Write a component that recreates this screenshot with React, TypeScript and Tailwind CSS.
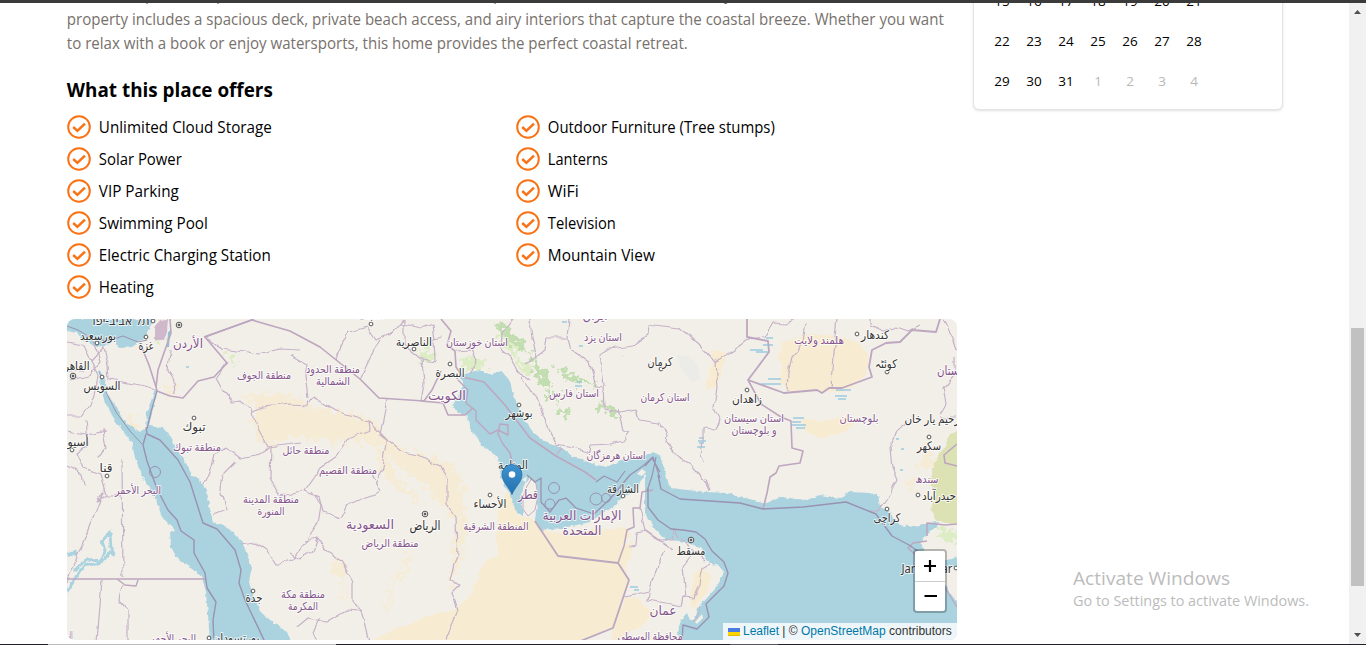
import React from "react";

type Line = { d: string; w?: number; c?: string };
type Label = { x: number; y: number; t: string; w: number; s?: number; k?: "city" | "area" };

const offersLeft = ["Unlimited Cloud Storage", "Solar Power", "VIP Parking", "Swimming Pool", "Electric Charging Station", "Heating"];
const offersRight = ["Outdoor Furniture (Tree stumps)", "Lanterns", "WiFi", "Television", "Mountain View"];

const weeks = [
  ["15", "16", "17", "18", "19", "20", "21"],
  ["22", "23", "24", "25", "26", "27", "28"],
  ["29", "30", "31", "1", "2", "3", "4"],
];

const water = [
  "M67 319H155L152 325 145 338 132 347 119 348 115 339 110 344 97 347 82 340 77 332 67 330Z",
  "M101 378L104 376 106 386 108 395 115 405 125 422 135 429 140 433 146 428 147 412 155 390 158 390 153 408 149 426 163 428 171 437 177 450 185 461 192 475 200 480 207 490 209 505 213 522 227 527 242 542 248 557 252 568 249 582 253 595 260 611 267 618 287 632 291 642H210L208 615 206 592 202 577 187 565 177 558 171 547 170 532 175 530 163 518 155 498 143 477 135 458 132 443 125 434 113 417 104 400 100 384Z",
  "M460 376L468 373 480 370 490 374 502 371 512 385 514 397 523 418 533 432 547 443 562 448 573 456 593 464 607 467 623 459 643 457 653 452 661 456 666 475 670 488 687 490 707 492 727 493 740 497 767 503 780 497 807 500 820 495 840 498 850 492 870 493 878 495 880 507 890 512 900 525 913 527 927 523 940 522 927 535 920 542 925 552 942 561 960 557V566L940 569 939 577 960 607V642H680L678 632 681 619 687 613 690 620 695 619 698 608 707 598 717 587 723 572 720 567 708 562 700 547 680 541 665 540 653 527 645 512 645 475 640 482 635 492 623 497 613 507 600 515 590 522 563 528 540 530 535 520 537 505 537 488 530 477 525 483 521 495 523 515 516 513 511 495 503 485 499 467 498 457 483 447 477 437 472 432 467 415 457 412 453 405 463 387Z",
];

const dunes = [
  "M510 482L504 500 498 508 497 540 498 555 482 563 478 582 469 595 456 609 423 618 400 627 390 632 370 642H576L613 628 629 580 618 563 622 545 631 534 625 528 590 530 567 533 540 530 535 518 518 515Z",
  "M618 570L621 548 634 541 628 565 626 574Z",
  "M613 628L625 598 640 599 653 614 639 628 624 634 619 642H614Z",
  "M783 343L805 334 833 335 860 343 869 355 866 376 850 388 840 391 817 392 787 391 780 383 783 366 777 358Z",
  "M804 417L820 422 848 416 853 425 842 433 820 438 804 430Z",
  "M711 352L719 351 726 353 717 387 707 389 708 372 713 362Z",
  "M694 574L703 566 711 578 707 592 692 610 691 595Z",
];

const sandStreaks = [
  "M238 388L247 394 257 396 270 393 301 396 301 404 320 408 350 413 373 421 383 436 404 449 435 458 453 465 463 482 465 540 456 576 447 592 452 560 455 525 445 508 430 492 412 477 392 459 374 445 344 440 334 444 318 439 290 437 271 445 260 440 250 418 259 412Z",
  "M382 449L390 465 409 489 428 507 412 499 398 487 382 472 377 464Z",
  "M123 412L130 414 143 430 139 434 127 424Z",
  "M165 386L174 383 175 395 164 395Z",
  "M922 455L930 449 934 462 925 474 918 468Z",
  "M908 475L914 476 916 494 910 488Z",
  "M337 562L345 564 347 595 352 606 345 598 340 580 332 569Z",
  "M410 550L413 551 396 586 388 614 385 613 393 582Z",
];

const green = [
  "M463 365L468 355 478 357 487 366 483 371 472 373 463 376Z",
  "M418 352L431 350 437 362 422 360Z",
  "M500 334L511 337 523 349 514 355 503 346Z",
  "M513 355L525 363 533 366 530 374 518 368Z",
  "M226 352L236 359 235 363 227 358Z",
  "M155 331L164 324 166 337 157 342Z",
  "M936 535L946 528 957 532V545L946 538Z",
];

const forest = [
  "M497 320L503 322 511 334 524 343 530 354 522 352 509 340 500 333Z",
  "M530 353L541 366 550 385 543 388 532 368Z",
  "M554 364L573 374 583 383 576 383 560 374Z",
  "M593 405L607 404 618 413 618 417 604 413Z",
  "M549 389L561 398 559 403 547 395Z",
  "M557 405L573 413 568 416 555 410Z",
  "M577 377L592 382 595 386 581 384Z",
  "M620 353L625 358 621 356Z",
];

const farm = ["M950 433L960 430V525L938 522 930 510 936 493 930 480 934 462 943 448Z"];

const frontiers: Line[] = [
  { d: "M142 348L149 365 156 387 157 391 170 396 183 398 198 381 214 377 227 363 205 337 254 319", w: 1.6 },
  { d: "M156 387L158 370 165 350 171 333 170 319", w: 1.6 },
  { d: "M204 337L252 320 262 323 290 331 320 347 335 359 360 379 379 398 424 401 432 390 441 371", w: 1.6 },
  { d: "M421 401L443 403 448 415 465 415 473 408", w: 1.6 },
  { d: "M441 319L451 331 447 345 455 351 456 367 463 377 484 382 505 405 530 438 556 456 585 472 596 480", w: 1.6 },
  { d: "M457 379L468 390 466 403 476 411 476 420 490 434 498 430 508 435 508 425 500 424 498 434 503 444 510 453 514 470", w: 1.4 },
  { d: "M67 579H206", w: 1.6 },
  { d: "M117 579L125 585 136 586 138 580", w: 1.4 },
  { d: "M535 521L558 556 618 563 629 580 613 628 578 642", w: 1.8 },
  { d: "M618 563L624 546 627 530 634 527 633 508 640 508 642 492 653 490", w: 1.5 },
  { d: "M747 319V337L768 341 769 352 748 380 784 393 817 390 822 393 829 388 842 388 872 377 869 367 872 350 886 343 900 342 912 330 936 332 940 319", w: 1.8 },
  { d: "M748 380L761 404 781 417 791 421 792 448 803 451 800 463 779 466 776 473 770 477 767 493 763 509", w: 1.6 },
  { d: "M927 541L913 543 908 548 937 575 957 607", w: 1.3 },
  { d: "M927 536V523L945 525 957 524", w: 1.5 },
  { d: "M957 444L944 455 945 463 957 466", w: 1.6 },
  // maritime limits
  { d: "M146 434L143 445 147 461 157 489 168 510 177 520 181 531 194 540V553L205 573 207 588 216 602 213 620 214 642", w: 1.4, c: "#9992b0" },
  { d: "M146 427L147 434 160 440 178 460 190 482 203 523 217 529 235 550 241 570 239 583 245 600 265 642", w: 1.4, c: "#9992b0" },
  { d: "M157 391L151 412 147 429", w: 1.2, c: "#9992b0" },
  { d: "M106 392L116 412 130 431 142 444", w: 1, c: "#9992b0" },
  { d: "M67 326L78 330 91 338 107 341 123 336 138 342 147 340", w: 1, c: "#9992b0" },
  { d: "M658 475L661 489 680 499 740 503 763 509 803 507 846 502 876 514 892 536 909 545 919 552", w: 1.4, c: "#9992b0" },
  { d: "M648 488V507L658 520 671 529 683 530 696 532 705 539 712 551 724 562 728 573 724 586 706 604 709 617 697 629 683 625 682 642", w: 1.4, c: "#9992b0" },
  { d: "M527 475L535 482 541 478 541 502 550 512 559 500 566 498 576 508 594 514 610 499 630 475 643 466 652 458 660 472", w: 1.3, c: "#9992b0" },
  { d: "M656 457L652 476 647 491M596 482L604 476 617 482 625 471M645 466L653 457 660 478", w: 1.2, c: "#9992b0" },
];

const provinces = [
  "M67 342L83 345 91 361 104 347 108 365 109 379 145 386 157 389",
  "M90 335L97 351 100 362 88 376 70 380M67 371L84 371M91 361L98 375 95 397 82 416 67 416",
  "M67 431L87 434 106 430M86 420L88 445 77 453 84 468 101 474 107 495 97 501 104 490 67 582",
  "M122 460L123 578M107 496H123M67 465L81 473 83 486M103 428L106 449 96 458",
  "M102 580L97 642M122 585L119 600 128 610 128 642",
  "M205 337L222 349 244 352 258 355 280 349 300 350",
  "M170 350L168 371 174 380 175 395M227 363L216 378 223 391 233 402 240 401 252 408 255 423 268 447 301 443",
  "M226 448L214 454 211 467 204 483M226 448L240 459 256 456 271 447 270 478 280 495 302 491",
  "M213 515L226 510 220 490 222 475 235 462",
  "M242 545L256 543 267 550 277 566 293 559 307 540 318 524 321 505 312 491",
  "M253 413L263 407 290 404 307 405",
  "M335 359L349 332 367 327",
  "M387 399L380 435 388 441M307 405L312 397 336 411 350 415 369 421 388 441 402 452 419 455 440 466 447 480",
  "M290 356L307 365 305 375 308 398M369 421L370 430 350 437 337 456 320 468 304 491 319 497 323 512 340 518 346 506 380 491 369 469",
  "M388 441L385 452 383 468 375 483M367 327L376 340 391 333 403 319M360 379L374 350 380 340M404 319V345L422 360 435 362 434 339 443 337M422 360L424 384 421 401",
  "M435 339L433 324 421 328 400 323M456 351L471 350 476 360 470 373",
  "M447 480L447 505 456 517 457 555 450 580 460 584 452 592 458 611 445 642",
  "M304 541L318 538 325 549 341 561 353 581 353 602 362 611 370 642M361 611L346 610 326 622 308 618 297 627",
  "M318 538L312 552 300 559 290 553M320 617L313 632 317 642",
  "M530 319L532 338 537 357 545 351 547 338 567 338 569 347 589 362 596 386 603 387 604 409 620 412 636 409 639 420 660 423 667 433 666 443 677 456 692 465 706 482 709 491",
  "M567 338L569 319M604 387L602 368 600 355 609 349 632 346 648 335 649 324 678 328 697 343 715 362 735 349 750 338 763 336",
  "M715 362L717 387 714 409 720 419 716 429 703 428 703 440 701 455 704 463",
  "M618 409L623 430 630 432 623 441 610 444 591 445 590 452 573 447 556 444 546 423 538 400 527 386 520 376",
  "M512 320L502 333 501 348 512 357 518 372 530 380M538 357L525 364M562 448L557 454",
  "M763 339L773 322 786 323 797 319M837 319L833 352 831 389M805 324L801 347 792 357 788 373 787 391",
  "M870 319V325L884 331 897 327 908 331 920 325M943 319L953 338 957 350M954 358L954 376 943 389 946 404 940 414",
  "M940 417H957M907 424L896 431 890 448 892 468 897 480 889 496 878 511 870 511",
  "M640 508L645 530 660 541 673 550M664 550L652 580 648 600 681 606 683 597 695 598 700 583 703 567 710 563M649 592L625 597",
  "M629 547L636 545 637 532 646 530 660 540 673 539 674 530 682 540 705 560M690 557L682 567 685 598M706 478L710 490M701 607L693 622",
];

const lakes = "M756 352h12M750 350h13M763 345h10M766 338h7M836 390h15M835 396h12M838 399h8M793 418h11M792 425h14M792 422h9M796 428h9M761 384h20M768 379h13M698 441h8M697 447h8M699 438h5M699 443h5M562 322h5M579 346h4M630 587h8M634 590h5M896 439h3M901 449h3M900 470h3M575 386h7M577 382h5M186 367h3";

const dots: [number, number, boolean?][] = [
  [179, 325, true], [153, 321], [146, 337], [97, 343], [73, 376, true], [102, 377], [72, 450], [107, 476], [194, 418], [371, 324], [414, 349], [450, 364],
  [519, 405], [490, 495], [425, 514, true], [253, 591], [209, 638], [661, 369], [857, 334], [887, 372], [747, 390], [929, 437], [918, 495], [887, 509], [623, 496], [691, 540, true], [956, 568],
];

const labels: Label[] = [
  { x: 121, y: 325, t: "תל אביב-יפו", w: 57, s: 12, k: "city" },
  { x: 98, y: 340, t: "بورسعيد", w: 36, k: "city" },
  { x: 146, y: 350, t: "غزة", w: 15, k: "city" },
  { x: 188, y: 348, t: "الأردن", w: 30, s: 12 },
  { x: 74, y: 370, t: "القاهرة", w: 31, k: "city" },
  { x: 102, y: 390, t: "السويس", w: 37, k: "city" },
  { x: 264, y: 379, t: "منطقة الجوف", w: 54 },
  { x: 194, y: 431, t: "تبوك", w: 23, k: "city" },
  { x: 197, y: 451, t: "منطقة تبوك", w: 48 },
  { x: 73, y: 446, t: "أسيوط", w: 31, k: "city" },
  { x: 106, y: 472, t: "قنا", w: 13, k: "city" },
  { x: 138, y: 494, t: "البحر الأحمر", w: 46 },
  { x: 271, y: 503, t: "منطقة المدينة", w: 56 },
  { x: 271, y: 515, t: "المنورة", w: 27 },
  { x: 306, y: 454, t: "منطقة حائل", w: 47 },
  { x: 333, y: 373, t: "منطقة الحدود", w: 54 },
  { x: 333, y: 385, t: "الشمالية", w: 34 },
  { x: 371, y: 319, t: "النجف", w: 27, k: "city" },
  { x: 414, y: 346, t: "الناصرية", w: 36, k: "city" },
  { x: 477, y: 346, t: "استان خوزستان", w: 62 },
  { x: 450, y: 377, t: "البصرة", w: 29, k: "city" },
  { x: 447, y: 400, t: "الكويت", w: 38, s: 12 },
  { x: 519, y: 417, t: "بوشهر", w: 27, k: "city" },
  { x: 348, y: 474, t: "منطقة القصيم", w: 58 },
  { x: 370, y: 529, t: "السعودية", w: 48, s: 12 },
  { x: 425, y: 530, t: "الرياض", w: 31, k: "city", s: 12 },
  { x: 390, y: 547, t: "منطقة الرياض", w: 57 },
  { x: 490, y: 508, t: "الأحساء", w: 33, k: "city" },
  { x: 496, y: 530, t: "المنطقة الشرقية", w: 65 },
  { x: 513, y: 469, t: "المنامة", w: 30, k: "city" },
  { x: 528, y: 499, t: "قطر", w: 20, s: 12 },
  { x: 254, y: 602, t: "جدة", w: 17, k: "city" },
  { x: 303, y: 598, t: "منطقة مكة", w: 44 },
  { x: 303, y: 610, t: "المكرمة", w: 30 },
  { x: 173, y: 642, t: "البحر الأحمر", w: 46 },
  { x: 236, y: 642, t: "بورتسودان", w: 47, k: "city" },
  { x: 68, y: 639, t: "النيل", w: 9 },
  { x: 595, y: 320, t: "ایران", w: 25, s: 12 },
  { x: 603, y: 341, t: "استان یزد", w: 38 },
  { x: 574, y: 397, t: "استان فارس", w: 50 },
  { x: 660, y: 366, t: "کرمان", w: 25, k: "city" },
  { x: 665, y: 401, t: "استان کرمان", w: 49 },
  { x: 747, y: 403, t: "زاهدان", w: 30, k: "city" },
  { x: 754, y: 422, t: "استان سیستان", w: 60 },
  { x: 754, y: 434, t: "و بلوچستان", w: 45 },
  { x: 616, y: 459, t: "استان هرمزگان", w: 59 },
  { x: 623, y: 493, t: "الشارقة", w: 32, k: "city" },
  { x: 582, y: 520, t: "الإمارات العربية", w: 79, s: 12 },
  { x: 582, y: 535, t: "المتحدة", w: 39, s: 12 },
  { x: 691, y: 555, t: "مسقط", w: 29, k: "city" },
  { x: 663, y: 615, t: "عمان", w: 27, s: 12 },
  { x: 650, y: 640, t: "محافظة الوسطى", w: 65 },
  { x: 819, y: 344, t: "هلمند ولایت", w: 50 },
  { x: 875, y: 339, t: "کندهار", w: 28, k: "city" },
  { x: 886, y: 368, t: "کوئٹہ", w: 22, k: "city" },
  { x: 954, y: 375, t: "پاکستان", w: 34, s: 12 },
  { x: 859, y: 422, t: "بلوچستان", w: 39 },
  { x: 932, y: 423, t: "رحیم یار خان", w: 55, k: "city" },
  { x: 929, y: 450, t: "سکھر", w: 24, k: "city" },
  { x: 927, y: 483, t: "سندھ", w: 23 },
  { x: 939, y: 500, t: "حیدرآباد", w: 34, k: "city" },
  { x: 887, y: 522, t: "کراچی", w: 27, k: "city" },
  { x: 927, y: 573, t: "Jamnagar", w: 51, k: "city", s: 12 },
];

const offerWidth: Record<string, number> = {
  "Unlimited Cloud Storage": 173,
  "Solar Power": 83,
  "VIP Parking": 80,
  "Swimming Pool": 109,
  "Electric Charging Station": 172,
  Heating: 55,
  "Outdoor Furniture (Tree stumps)": 227,
  Lanterns: 60,
  WiFi: 31,
  Television: 68,
  "Mountain View": 107,
};

function CheckCircle() {
  return (
    <svg width="24" height="24" viewBox="0 0 24 24" fill="none" stroke="#f97316" className="shrink-0">
      <circle cx="12" cy="12" r="10.8" strokeWidth="2" />
      <path d="M6.2 12L10.4 15.9L18 8.6" strokeWidth="2.5" />
    </svg>
  );
}

function Offer({ text }: { text: string }) {
  return (
    <li className="flex h-6 items-center gap-2">
      <CheckCircle />
      <svg className="h-6 grow overflow-visible" aria-label={text}>
        <text x="-0.2" y="18" textLength={offerWidth[text]} lengthAdjust="spacingAndGlyphs" className="fill-black text-[15.5px]">
          {text}
        </text>
      </svg>
    </li>
  );
}

function RegionMap() {
  return (
    <svg width="890" height="321" viewBox="67 319 890 321" className="block">
      <defs>
        <linearGradient id="pin" x1="0" y1="0" x2="0" y2="1">
          <stop offset="0" stopColor="#3f93d0" />
          <stop offset="1" stopColor="#2471ae" />
        </linearGradient>
        <filter id="rough" filterUnits="userSpaceOnUse" x="57" y="309" width="910" height="341">
          <feTurbulence type="fractalNoise" baseFrequency="0.1" numOctaves="1" seed="4" result="n" />
          <feDisplacementMap in="SourceGraphic" in2="n" scale="7" xChannelSelector="R" yChannelSelector="G" />
        </filter>
        <filter id="coast" filterUnits="userSpaceOnUse" x="57" y="309" width="910" height="341">
          <feTurbulence type="fractalNoise" baseFrequency="0.2" numOctaves="2" seed="9" result="n" />
          <feDisplacementMap in="SourceGraphic" in2="n" scale="4" xChannelSelector="R" yChannelSelector="G" />
        </filter>
        <filter id="scatter" filterUnits="userSpaceOnUse" x="57" y="309" width="910" height="341">
          <feTurbulence type="fractalNoise" baseFrequency="0.16" numOctaves="3" seed="2" result="n" />
          <feDisplacementMap in="SourceGraphic" in2="n" scale="22" xChannelSelector="R" yChannelSelector="G" />
        </filter>
      </defs>
      <rect x="67" y="319" width="890" height="321" fill="#f2efe9" />
      <g filter="url(#rough)">
        {dunes.map((d) => <path key={d} d={d} fill="#f7ecd1" />)}
        {farm.map((d) => <path key={d} d={d} fill="#dde2b4" />)}
      </g>
      <g filter="url(#scatter)">
        {sandStreaks.map((d) => <path key={d} d={d} fill="#f6ecd5" />)}
        {green.map((d) => <path key={d} d={d} fill="#dcecc3" />)}
        {forest.map((d) => <path key={d} d={d} fill="#c2ddb0" />)}
      </g>
      <path d="M677 355L689 356 698 366 700 380 692 382 682 370Z" fill="#ebebe7" />
      <path d="M155 328L160 320 168 319 167 332 164 341 155 339Z" fill="#cfb7cc" filter="url(#rough)" />
      <g filter="url(#coast)">
        {water.map((d) => <path key={d} d={d} fill="#aad3df" />)}
        <path d="M74 571L81 564 87 559 100 562 105 551 102 541 110 532 111 548 115 556 110 552 104 560 97 565 86 564 79 572 67 592M67 553l10 1M69 556l7-5" stroke="#aad3df" strokeWidth="2.8" fill="none" />
      </g>
      <path d="M532 478L527 486 523 497 523 509 528 516 535 510 538 496 536 484Z" fill="#f2efe9" stroke="#c3aec6" />
      <path d="M637 474l5-5 4 3-4 4zM522 480l5-4-1 6zM695 622l7-8 1 4-6 6z" fill="#f2efe9" />
      <path d="M169 332L168 347M102 378l-3-7M169 337l1-6" stroke="#8fc3da" strokeWidth="2" fill="none" />
      <path d={lakes} stroke="#9acbe0" strokeWidth="1.3" />
      <g filter="url(#rough)" fill="none" stroke="#c6b2c8" strokeWidth="1.2" strokeLinejoin="round">
        {provinces.map((d) => <path key={d} d={d} />)}
      </g>
      {frontiers.map((b) => (
        <path key={b.d} d={b.d} fill="none" stroke={b.c ?? "#bda6bf"} strokeWidth={b.w ?? 1} strokeLinejoin="round" />
      ))}
      <g fill="none" stroke="#9992b0" strokeWidth="1">
        <circle cx="155" cy="472" r="5.5" />
        <circle cx="554" cy="488" r="5.5" />
        <circle cx="550" cy="504" r="5" />
        <circle cx="596" cy="499" r="6" />
        <circle cx="606" cy="498" r="4.5" />
      </g>
      {dots.map(([x, y, cap]) => (
        <g key={x + "-" + y} fill="#fff" stroke="#555" strokeWidth="1">
          <circle cx={x} cy={y} r={cap ? 2.8 : 1.9} />
          {cap && <circle cx={x} cy={y} r="1" fill="#444" />}
        </g>
      ))}
      {labels.map((l) => (
        <text
          key={l.x + "," + l.y}
          x={l.x}
          y={l.y}
          textAnchor="middle"
          textLength={l.w}
          lengthAdjust="spacingAndGlyphs"
          fontSize={l.s ? l.s + 1 : l.k ? 12 : 11}
          fill={l.k ? "#333" : "#85558c"}
          stroke="#fff"
          strokeOpacity=".75"
          strokeWidth="2"
          strokeLinejoin="round"
          paintOrder="stroke"
          fontFamily="'Noto Sans', 'DejaVu Sans', sans-serif"
        >
          {l.t}
        </text>
      ))}
      <path d="M512 494.500C509 487 502 482 502 474.500A10 10 0 0 1 522 474.500C522 482 515 487 512 494.500Z" fill="url(#pin)" stroke="#2a74ad" strokeWidth=".8" />
      <circle cx="512" cy="474.5" r="3.3" fill="#fff" />
    </svg>
  );
}

export default function App() {
  return (
    <div className="relative flex h-[645px] w-[1366px] flex-col overflow-hidden bg-white font-['Open_Sans','Noto_Sans',sans-serif] text-black">
      <div className="h-[3px] shrink-0 bg-[#3b3b3b]" />
      <div className="flex h-[641px] overflow-hidden">
        <main className="ml-[67px] w-[890px] shrink-0">
          <div className="-mt-5 h-[73px] text-[#78716c]">
            <svg width="890" height="72" className="block overflow-visible text-[15.5px]" fill="currentColor">
              <text x="78" y="17">p</text>
              <text x="149" y="17">p</text>
              <text x="426" y="17">p</text>
              <text x="657" y="17">y</text>
              <text x="-0.2" y="42" textLength="877" lengthAdjust="spacingAndGlyphs">
                property includes a spacious deck, private beach access, and airy interiors that capture the coastal breeze. Whether you want
              </text>
              <text x="-0.2" y="66" textLength="621" lengthAdjust="spacingAndGlyphs">
                to relax with a book or enjoy watersports, this home provides the perfect coastal retreat.
              </text>
            </svg>
          </div>
          <h2 className="mt-5 h-7">
            <svg width="300" height="28" className="block overflow-visible">
              <text x="-0.2" y="21" textLength="206" lengthAdjust="spacingAndGlyphs" className="fill-black text-[19px] font-bold">
                What this place offers
              </text>
            </svg>
          </h2>
          <div className="mt-[11px] grid h-44 grid-cols-[449px_441px]">
            <ul className="flex flex-col gap-2">
              {offersLeft.map((o) => <Offer key={o} text={o} />)}
            </ul>
            <ul className="flex flex-col gap-2">
              {offersRight.map((o) => <Offer key={o} text={o} />)}
            </ul>
          </div>
          <section className="relative mt-7 h-[321px] overflow-hidden rounded-lg">
            <RegionMap />
            <div className="absolute right-[10px] bottom-[27px] flex h-[64px] w-[34px] flex-col overflow-hidden rounded border-2 border-black/25 bg-white bg-clip-padding">
              <button className="flex h-[31px] items-center justify-center border-b border-[#ccc]">
                <svg width="14" height="14" viewBox="0 0 14 14" stroke="#000" strokeWidth="2.2"><path d="M1 7H13M7 1V13" /></svg>
              </button>
              <button className="flex h-[27px] items-center justify-center">
                <svg width="14" height="14" viewBox="0 0 14 14" stroke="#000" strokeWidth="2"><path d="M1.5 7H14" /></svg>
              </button>
            </div>
            <div className="absolute right-0 bottom-0 flex h-[17px] w-[234px] items-center bg-white/80 pb-0.5 pl-[5px] font-['Liberation_Sans',Arial,sans-serif] text-[12px] whitespace-pre text-[#333]">
              <svg width="12" height="8" viewBox="0 0 12 8" className="mt-0.5 mr-[3px]"><path d="M0 0h12v4H0z" fill="#4c7be1" /><path d="M0 4h12v3H0z" fill="#ffd500" /><path d="M0 7h12v1H0z" fill="#e0bc00" /></svg>
              <span className="text-[#0078a8]">Leaflet</span>
              <span> | © </span>
              <span className="text-[#0078a8]">OpenStreetMap</span>
              <span> contributors</span>
            </div>
          </section>
        </main>
        <aside className="ml-4 w-[310px] shrink-0">
          <div className="-mt-[23px] h-[130px] rounded-md border border-[#e5e5e5] bg-white pl-3 text-[13.5px] shadow-sm">
            {weeks.map((week, row) => (
              <div key={row} className="flex h-10 items-center">
                {week.map((day) => (
                  <span key={day} className={row === 2 && day.length === 1 ? "w-8 text-center text-[#b8b8b8]" : "w-8 text-center"}>{day}</span>
                ))}
              </div>
            ))}
          </div>
          <div className="mt-[456px] ml-[100px] whitespace-nowrap text-[#bcbcbc]">
            <svg width="240" height="50" className="block" fill="currentColor">
              <text x="0" y="19" textLength="157" lengthAdjust="spacingAndGlyphs" className="text-[19px]">Activate Windows</text>
              <text x="0" y="40" textLength="236" lengthAdjust="spacingAndGlyphs" className="text-[14.3px]">Go to Settings to activate Windows.</text>
            </svg>
          </div>
        </aside>
        <div className="ml-auto flex w-[17px] shrink-0 flex-col items-center bg-[#f1f1f1]">
          <svg width="17" height="17" viewBox="0 0 17 17"><path d="M5 11L8.5 7L12 11Z" fill="#505050" /></svg>
          <div className="mt-[308px] h-[258px] w-[13px] bg-[#c1c1c1]" />
          <svg width="17" height="17" viewBox="0 0 17 17" className="mt-auto"><path d="M5 6L8.5 10L12 6Z" fill="#505050" /></svg>
        </div>
      </div>
      <div className="flex h-px shrink-0 bg-[#20222e]">
        <div className="ml-12 w-72 bg-[#bdbdbd]" />
        <div className="ml-[394px] w-12 bg-[#555761]" />
      </div>
    </div>
  );
}
